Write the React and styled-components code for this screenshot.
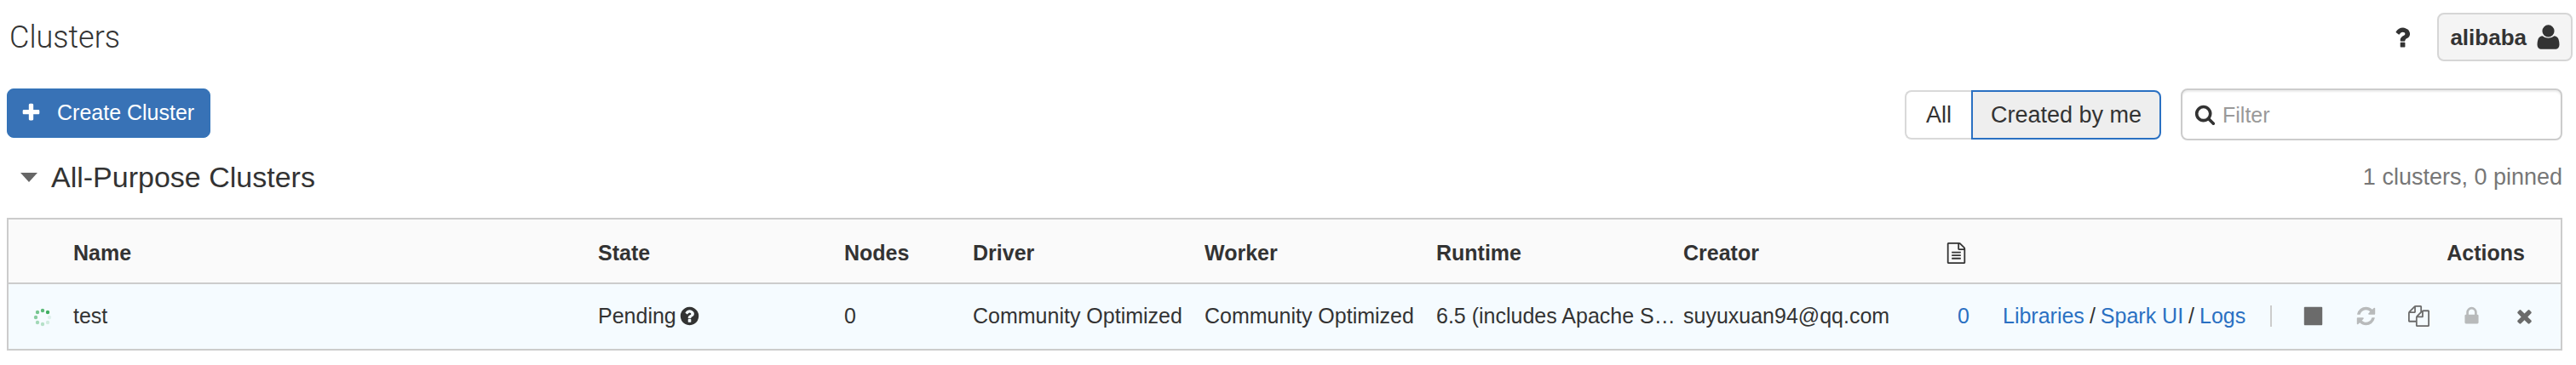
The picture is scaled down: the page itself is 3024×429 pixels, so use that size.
import styled, { createGlobalStyle } from "styled-components"

const GlobalStyle = createGlobalStyle`
    * {
        box-sizing: border-box;
    }
    body {
        margin: 0;
        background: #fff;
        color: #333;
        font-family: "Liberation Sans", Arial, sans-serif;
        font-size: 25px;
        line-height: 32px;
    }
    button, input {
        font: inherit;
        color: inherit;
    }
`

const icons = {
  plus: "M1600 736v192q0 40-28 68t-68 28h-416v416q0 40-28 68t-68 28h-192q-40 0-68-28t-28-68v-416h-416q-40 0-68-28t-28-68v-192q0-40 28-68t68-28h416v-416q0-40 28-68t68-28h192q40 0 68 28t28 68v416h416q40 0 68 28t28 68z",
  search: "M1216 832q0-185-131.5-316.5t-316.5-131.5-316.5 131.5-131.5 316.5 131.5 316.5 316.5 131.5 316.5-131.5 131.5-316.5zm512 832q0 52-38 90t-90 38q-54 0-90-38l-343-342q-179 124-399 124-143 0-273.5-55.5t-225-150-150-225-55.5-273.5 55.5-273.5 150-225 225-150 273.5-55.5 273.5 55.5 225 150 150 225 55.5 273.5q0 220-124 399l343 343q37 37 37 90z",
  help: "M1024 1376v-192q0-14-9-23t-23-9h-192q-14 0-23 9t-9 23v192q0 14 9 23t23 9h192q14 0 23-9t9-23zm256-672q0-88-55.5-163t-138.5-116-170-41q-243 0-371 213-15 24 8 42l132 100q7 6 19 6 16 0 25-12 53-68 86-92 34-24 86-24 48 0 85.5 26t37.5 59q0 38-20 61t-68 45q-63 28-115.5 86.5t-52.5 125.5v36q0 14 9 23t23 9h192q14 0 23-9t9-23q0-19 21.5-49.5t54.5-49.5q32-18 49-28.5t46-35 44.5-48 28-60.5 12.5-81zm384 192q0 209-103 385.5t-279.5 279.5-385.5 103-385.5-103-279.5-279.5-103-385.5 103-385.5 279.5-279.5 385.5-103 385.5 103 279.5 279.5 103 385.5z",
  question: "M1088 1256v240q0 16-12 28t-28 12h-240q-16 0-28-12t-12-28v-240q0-16 12-28t28-12h240q16 0 28 12t12 28zm316-600q0 54-15.5 101t-35 76.5-55 59.5-57.5 43.5-61 35.5q-41 23-68.5 65t-27.5 67q0 17-12 32.5t-28 15.5h-240q-15 0-25.5-18.5t-10.5-37.5v-45q0-83 65-156.5t143-108.5q59-27 84-56t25-76q0-42-46.5-74t-107.5-32q-65 0-108 29-35 25-107 115-13 16-31 16-12 0-25-8l-164-125q-13-10-15.5-25t5.5-28q160-266 464-266 80 0 161 31t146 83 106 127.5 41 158.5z",
  user: "M1600 1399q0 109-62.5 187t-150.5 78h-982q-88 0-150.5-78t-62.5-187q0-85 8.5-160.5t31.5-152 58.5-131 94-89 134.5-34.5q131 128 377 128t377-128q76 0 134.5 34.5t94 89 58.5 131 31.5 152 8.5 160.5zm-320-887q0 159-112.5 271.5t-271.5 112.5-271.5-112.5-112.5-271.5 112.5-271.5 271.5-112.5 271.5 112.5 112.5 271.5z",
  stop: "M1664 192v1408q0 26-19 45t-45 19h-1408q-26 0-45-19t-19-45v-1408q0-26 19-45t45-19h1408q26 0 45 19t19 45z",
  refresh: "M1639 1056q0 5-1 7-64 268-268 434.5t-478 166.5q-146 0-282.5-55t-243.5-157l-129 129q-19 19-45 19t-45-19-19-45v-448q0-26 19-45t45-19h448q26 0 45 19t19 45-19 45l-137 137q71 66 161 102t187 36q134 0 250-65t186-179q11-17 53-117 8-23 30-23h192q13 0 22.5 9.5t9.5 22.5zm25-800v448q0 26-19 45t-45 19h-448q-26 0-45-19t-19-45 19-45l138-138q-148-137-349-137-134 0-250 65t-186 179q-11 17-53 117-8 23-30 23h-199q-13 0-22.5-9.5t-9.5-22.5v-7q65-268 270-434.5t480-166.5q146 0 284 55.5t245 156.5l130-129q19-19 45-19t45 19 19 45z",
  copy: "M1696 384q40 0 68 28t28 68v1216q0 40-28 68t-68 28h-960q-40 0-68-28t-28-68v-288h-544q-40 0-68-28t-28-68v-672q0-40 20-88t48-76l408-408q28-28 76-48t88-20h416q40 0 68 28t28 68v328q68-40 128-40h416zm-544 213l-299 299h299v-299zm-640-384l-299 299h299v-299zm196 647l316-316v-416h-384v416q0 40-28 68t-68 28h-416v640h512v-256q0-40 20-88t48-76zm956 804v-1152h-384v416q0 40-28 68t-68 28h-416v640h896z",
  lock: "M640 768h512v-192q0-106-75-181t-181-75-181 75-75 181v192zm832 96v576q0 40-28 68t-68 28h-960q-40 0-68-28t-28-68v-576q0-40 28-68t68-28h32v-192q0-184 132-316t316-132 316 132 132 316v192h32q40 0 68 28t28 68z",
  times: "M1490 1322q0 40-28 68l-136 136q-28 28-68 28t-68-28l-294-294-294 294q-28 28-68 28t-68-28l-136-136q-28-28-28-68t28-68l294-294-294-294q-28-28-28-68t28-68l136-136q28-28 68-28t68 28l294 294 294-294q28-28 68-28t68 28l136 136q28 28 28 68t-28 68l-294 294 294 294q28 28 28 68z",
  file: "M1596 380q28 28 48 76t20 88v1152q0 40-28 68t-68 28h-1344q-40 0-68-28t-28-68v-1600q0-40 28-68t68-28h896q40 0 88 20t76 48zm-444-244v376h376q-10-29-22-41l-313-313q-12-12-41-22zm384 1528v-1024h-416q-40 0-68-28t-28-68v-416h-768v1536h1280zm-1024-864q0-14 9-23t23-9h704q14 0 23 9t9 23v64q0 14-9 23t-23 9h-704q-14 0-23-9t-9-23v-64zm736 224q14 0 23 9t9 23v64q0 14-9 23t-23 9h-704q-14 0-23-9t-9-23v-64q0-14 9-23t23-9h704zm0 256q14 0 23 9t9 23v64q0 14-9 23t-23 9h-704q-14 0-23-9t-9-23v-64q0-14 9-23t23-9h704z",
}

const Svg = styled.svg`
    display: block;
    flex: none;
    width: ${props => props.$size}px;
    height: ${props => props.$size}px;
    fill: currentColor;
`

const Icon = ({ name, size = 25 }) => (
  <Svg viewBox="0 0 1792 1792" $size={size} aria-hidden="true">
    <path d={icons[name]} />
  </Svg>
)

const Container = styled.div`
    padding: 15px 4px 16px 8px;
`
const Header = styled.header`
    display: flex;
    align-items: center;
    justify-content: space-between;
`
const Title = styled.h1`
    margin: 0;
    padding-left: 3px;
    font-family: Roboto, "Liberation Sans", sans-serif;
    font-size: 36px;
    font-weight: 300;
    line-height: 56px;
`
const HeaderRight = styled.div`
    display: flex;
    align-items: center;
    gap: 25px;
`
const HelpButton = styled.button`
    display: flex;
    padding: 0;
    border: none;
    background: none;
`
const UserButton = styled.button`
    display: flex;
    align-items: center;
    gap: 9px;
    height: 57px;
    padding: 0 10px 0 13px;
    border: 2px solid #d6d6d6;
    border-radius: 8px;
    background: #f4f4f4;
    font-size: 26px;
    font-weight: bold;
`
const Content = styled.main`
    margin-right: 12px;
`
const Toolbar = styled.div`
    display: flex;
    align-items: flex-start;
    justify-content: space-between;
    margin-top: 32px;
`
const CreateButton = styled.button`
    display: flex;
    align-items: center;
    gap: 18px;
    height: 58px;
    padding: 0 18px 2px 15px;
    border: 1px solid #3173b9;
    border-radius: 8px;
    background: #3872b6;
    color: #fff;
`
const Filters = styled.div`
    display: flex;
    align-items: center;
    gap: 23px;
`
const Toggle = styled.div`
    display: flex;
`
const ToggleButton = styled.button`
    height: 58px;
    padding: 0 ${props => props.$active ? 21 : 23}px;
    border: 2px solid ${props => props.$active ? "#2a70c2" : "#d9d9d9"};
    border-radius: ${props => props.$active ? "0 8px 8px 0" : "8px 0 0 8px"};
    border-right-width: ${props => props.$active ? "2px" : "0"};
    background: ${props => props.$active ? "#eee" : "#fff"};
    font-size: 27px;
`
const SearchBox = styled.label`
    display: flex;
    align-items: center;
    gap: 8px;
    width: 448px;
    height: 61px;
    padding: 0 14px;
    border: 2px solid #ccc;
    border-radius: 8px;
    box-shadow: inset 0 2px 2px rgba(0, 0, 0, 0.08);
`
const SearchInput = styled.input`
    flex: 1;
    min-width: 0;
    padding: 0;
    border: none;
    outline: none;
    background: none;
    &::placeholder {
        color: #999;
        opacity: 1;
    }
`
const SectionHeader = styled.div`
    display: flex;
    align-items: center;
    justify-content: space-between;
    height: 60px;
    margin: 13px 0 18px;
    padding-left: 16px;
`
const SectionTitle = styled.h2`
    display: flex;
    align-items: center;
    gap: 16px;
    margin: 0;
    font-size: 34px;
    font-weight: normal;
    line-height: 40px;
`
const Caret = styled.span`
    border: 10px solid transparent;
    border-top: 11px solid #666;
    border-bottom: none;
`
const Summary = styled.span`
    color: #777;
    font-size: 27px;
`
const Table = styled.table`
    width: 100%;
    table-layout: fixed;
    border-collapse: collapse;
    border: 2px solid #ccc;
`
const Col = styled.col`
    width: ${props => props.$width ? props.$width + "px" : "auto"};
`
const HeadRow = styled.tr`
    background: #fafafa;
`
const Row = styled.tr`
    border-top: 2px solid #ccc;
    background: #f5fbff;
`
const Th = styled.th`
    height: 76px;
    padding: 4px ${props => props.$end || 0}px 0 10px;
    text-align: ${props => props.$end ? "right" : "left"};
`
const Td = styled.td`
    height: 78px;
    padding: 0 ${props => props.$end || 0}px 2px 10px;
    text-align: ${props => props.$end ? "right" : "left"};
    white-space: nowrap;
`
const State = styled.div`
    display: flex;
    align-items: center;
    gap: 3px;
`
const Spinner = styled.svg`
    display: block;
    width: 24px;
    height: 24px;
    margin-left: 28px;
    fill: #3fae60;
`
const SpinnerCell = styled.td`
    padding: 2px 0 0;
`
const FileIcon = styled.span`
    display: flex;
    justify-content: flex-end;
`
const Link = styled.a`
    color: #2a70c2;
    text-decoration: none;
`
const Actions = styled.div`
    display: flex;
    align-items: center;
    justify-content: space-between;
`
const Links = styled.div`
    display: flex;
    gap: 6px;
`
const Buttons = styled.div`
    display: flex;
    align-items: center;
    gap: 37px;
    padding-left: 36px;
    border-left: 2px solid #ccc;
`
const ActionButton = styled.button`
    display: flex;
    padding: 0;
    border: none;
    background: none;
    color: #6b6b6b;
    &:disabled {
        color: #b8babb;
    }
`

const dots = [
  [18, 6, 1],
  [12, 4, 0.85],
  [6, 6, 0.7],
  [4, 12, 0.6],
  [6, 18, 0.45],
  [12, 20, 0.35],
  [18, 18, 0.2],
  [20, 12, 0.12],
]

const widths = [67, null, 289, 151, 272, 272, 290, 310, 65, 666]

const App = () => {
  return (
    <Container>
        <GlobalStyle/>
        <Header>
            <Title>Clusters</Title>
            <HeaderRight>
                <HelpButton aria-label="Help"><Icon name="question" size={32}/></HelpButton>
                <UserButton>alibaba <Icon name="user" size={33}/></UserButton>
            </HeaderRight>
        </Header>
        <Content>
            <Toolbar>
                <CreateButton><Icon name="plus"/>Create Cluster</CreateButton>
                <Filters>
                    <Toggle>
                        <ToggleButton>All</ToggleButton>
                        <ToggleButton $active>Created by me</ToggleButton>
                    </Toggle>
                    <SearchBox>
                        <Icon name="search"/>
                        <SearchInput type="text" placeholder="Filter" aria-label="Filter"/>
                    </SearchBox>
                </Filters>
            </Toolbar>
            <SectionHeader>
                <SectionTitle><Caret/>All-Purpose Clusters</SectionTitle>
                <Summary>1 clusters, 0 pinned</Summary>
            </SectionHeader>
            <Table>
                <colgroup>
                    {widths.map((width, i) => <Col key={i} $width={width}/>)}
                </colgroup>
                <thead>
                    <HeadRow>
                        <Th/>
                        <Th>Name</Th>
                        <Th>State</Th>
                        <Th>Nodes</Th>
                        <Th>Driver</Th>
                        <Th>Worker</Th>
                        <Th>Runtime</Th>
                        <Th>Creator</Th>
                        <Th $end={32} aria-label="Notebooks"><FileIcon><Icon name="file"/></FileIcon></Th>
                        <Th $end={42}>Actions</Th>
                    </HeadRow>
                </thead>
                <tbody>
                    <Row>
                        <SpinnerCell>
                            <Spinner viewBox="0 0 24 24">
                                {dots.map(([x, y, opacity]) => (
                                  <circle key={x + "-" + y} cx={x} cy={y} r="2.2" opacity={opacity}/>
                                ))}
                            </Spinner>
                        </SpinnerCell>
                        <Td>test</Td>
                        <Td><State>Pending <Icon name="help"/></State></Td>
                        <Td>0</Td>
                        <Td>Community Optimized</Td>
                        <Td>Community Optimized</Td>
                        <Td>6.5 (includes Apache S…</Td>
                        <Td>suyuxuan94@qq.com</Td>
                        <Td $end={29}><Link href="#">0</Link></Td>
                        <Td $end={30}>
                            <Actions>
                                <Links>
                                    <Link href="#">Libraries</Link>/
                                    <Link href="#">Spark UI</Link>/
                                    <Link href="#">Logs</Link>
                                </Links>
                                <Buttons>
                                    <ActionButton aria-label="Terminate"><Icon name="stop"/></ActionButton>
                                    <ActionButton aria-label="Restart" disabled><Icon name="refresh"/></ActionButton>
                                    <ActionButton aria-label="Clone"><Icon name="copy"/></ActionButton>
                                    <ActionButton aria-label="Permissions" disabled><Icon name="lock"/></ActionButton>
                                    <ActionButton aria-label="Delete"><Icon name="times"/></ActionButton>
                                </Buttons>
                            </Actions>
                        </Td>
                    </Row>
                </tbody>
            </Table>
        </Content>
    </Container>
  )
}

export default App
